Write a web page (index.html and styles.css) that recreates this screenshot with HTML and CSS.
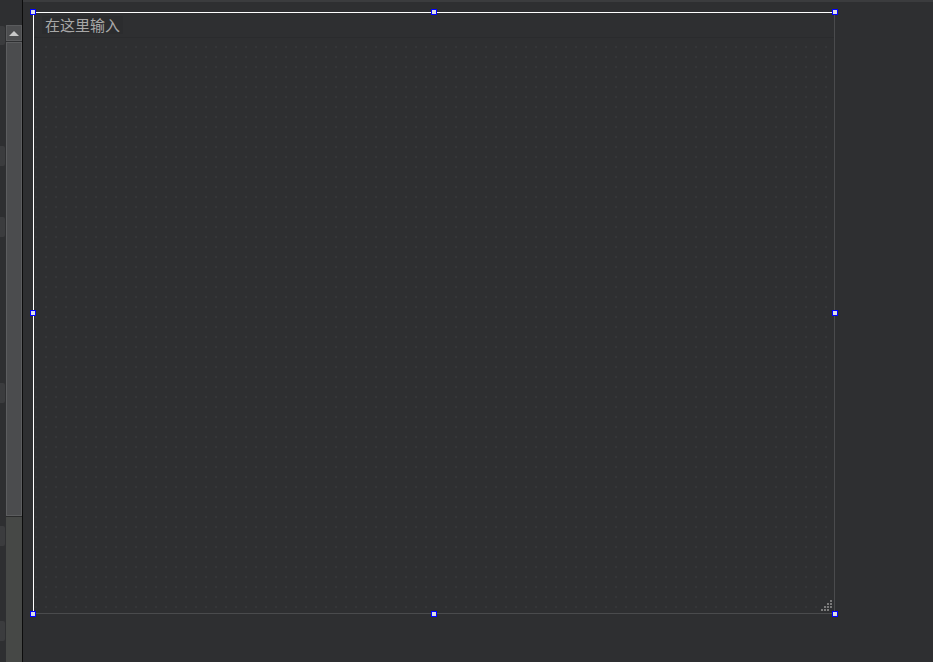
FILE: index.html
```html
<!DOCTYPE html>
<html lang="zh">
<head>
    <meta charset="UTF-8">
    <title>文本输入</title>
    <link rel="stylesheet" href="styles.css">
</head>
<body>
    <div class="window">
        <!-- Left dock with tabs and scrollbar -->
        <div class="side">
            <div class="tabs">
                <div class="tab t1"></div>
                <div class="tab t2"></div>
                <div class="tab t3"></div>
                <div class="tab t4"></div>
                <div class="tab t5"></div>
                <div class="tab t6"></div>
            </div>
            <div class="scrollbar">
                <div class="scroll-up"><span class="arrow"></span></div>
                <div class="scroll-thumb"></div>
                <div class="scroll-track"></div>
            </div>
        </div>

        <!-- Canvas with the selected text box -->
        <div class="canvas">
            <div class="textbox">
                <div class="textbox-head">
                    <span class="placeholder">在这里输入</span>
                </div>
                <div class="grip">
                    <svg width="12" height="12" viewBox="0 0 12 12">
                        <rect x="9" y="0" width="2" height="2" fill="#7a7a7a"/>
                        <rect x="6" y="3" width="2" height="2" fill="#7a7a7a"/>
                        <rect x="9" y="3" width="2" height="2" fill="#7a7a7a"/>
                        <rect x="3" y="6" width="2" height="2" fill="#7a7a7a"/>
                        <rect x="6" y="6" width="2" height="2" fill="#7a7a7a"/>
                        <rect x="9" y="6" width="2" height="2" fill="#7a7a7a"/>
                        <rect x="0" y="9" width="2" height="2" fill="#7a7a7a"/>
                        <rect x="3" y="9" width="2" height="2" fill="#7a7a7a"/>
                        <rect x="6" y="9" width="2" height="2" fill="#7a7a7a"/>
                    </svg>
                </div>
                <span class="handle h-tl"></span>
                <span class="handle h-tc"></span>
                <span class="handle h-tr"></span>
                <span class="handle h-ml"></span>
                <span class="handle h-mr"></span>
                <span class="handle h-bl"></span>
                <span class="handle h-bc"></span>
                <span class="handle h-br"></span>
            </div>
        </div>
    </div>
</body>
</html>
```

FILE: styles.css
```css
html, body {
    margin: 0;
    height: 100%;
    background-color: #2e2f31;
    font-family: "Noto Sans CJK SC", "Noto Sans", sans-serif;
    overflow: hidden;
}
.window {
    display: flex;
    height: 662px;
}
.side {
    display: flex;
    width: 22px;
    border-right: 1px solid #0c0c0c;
    background-color: #2e2f31;
}
.tabs {
    width: 5px;
    margin-right: 1px;
    display: flex;
    flex-direction: column;
}
.tab {
    height: 19px;
    background-color: #3b3c3e;
    border-radius: 0 2px 2px 0;
}
.t1 { margin-top: 26px; }
.t2 { margin-top: 101px; height: 20px; }
.t3 { margin-top: 51px; height: 20px; }
.t4 { margin-top: 146px; height: 20px; }
.t5 { margin-top: 123px; height: 20px; }
.t6 { margin-top: 75px; height: 20px; }
.scrollbar {
    width: 16px;
    display: flex;
    flex-direction: column;
    padding-top: 25px;
}
.scroll-up {
    height: 16px;
    background-color: #4c4d4f;
    border: 1px solid #5a5b5d;
    box-sizing: border-box;
    display: flex;
    align-items: center;
    justify-content: center;
}
.arrow {
    width: 0;
    height: 0;
    border-left: 5px solid transparent;
    border-right: 5px solid transparent;
    border-bottom: 5px solid #c8c8c8;
}
.scroll-thumb {
    height: 474px;
    margin-top: 1px;
    background-color: #4b4c4e;
    border: 1px solid #5c5d5f;
    box-sizing: border-box;
}
.scroll-track {
    flex: 1;
    background-color: #464846;
    border-top: 1px solid #2a2b2b;
}
.canvas {
    flex: 1;
    border-top: 2px solid #3b3c3e;
    padding: 10px 0 0 10px;
}
.textbox {
    position: relative;
    width: 802px;
    height: 602px;
    border-top: 1px solid #ffffff;
    border-left: 1px solid #ffffff;
    border-right: 1px solid #4a4b4d;
    border-bottom: 1px solid #4a4b4d;
    box-sizing: border-box;
    background-color: #2e2f31;
    background-image: radial-gradient(circle, #353639 0.8px, transparent 0.9px);
    background-size: 10px 10px;
    background-position: -3px -1px;
}
.textbox-head {
    height: 25px;
    border-bottom: 1px solid #2a2b2d;
    background-color: #2e2f31;
    padding: 3px 0 0 8px;
    box-sizing: border-box;
    display: flex;
    align-items: flex-start;
}
.placeholder {
    padding: 0 3px;
    font-size: 15px;
    line-height: 18px;
    color: #a8a8a8;
    background-color: #2b2c2e;
}
.grip {
    position: absolute;
    right: 1px;
    bottom: 1px;
    width: 12px;
    height: 12px;
    display: flex;
}
.handle {
    position: absolute;
    width: 6px;
    height: 6px;
    box-sizing: border-box;
    border: 1px solid #0000ff;
    background-color: #dcdce6;
}
.h-tl { left: -4px; top: -4px; }
.h-tc { left: 397px; top: -4px; }
.h-tr { right: -4px; top: -4px; }
.h-ml { left: -4px; top: 297px; }
.h-mr { right: -4px; top: 297px; }
.h-bl { left: -4px; bottom: -4px; }
.h-bc { left: 397px; bottom: -4px; }
.h-br { right: -4px; bottom: -4px; }
```
